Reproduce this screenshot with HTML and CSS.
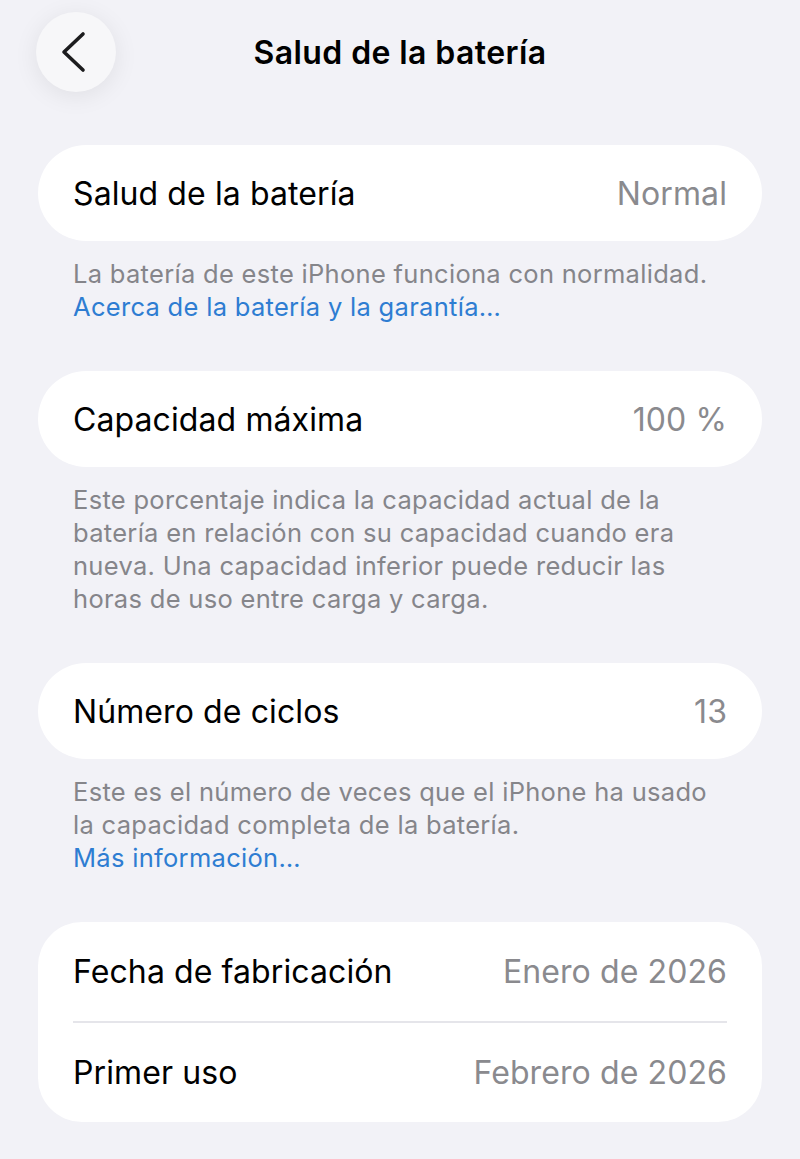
FILE: index.html
```html
<!DOCTYPE html>
<html>
<head>
    <title>Salud de la batería</title>
    <link rel="stylesheet" href="styles.css">
</head>
<body>
    <div class="nav-bar">
        <div class="back-btn">
            <svg width="28" height="42" viewBox="0 0 28 42">
                <path d="M24 3 L5 21 L24 39" fill="none" stroke="#1c1c1e" stroke-width="3.6" stroke-linecap="round" stroke-linejoin="round"/>
            </svg>
        </div>
        <h1 class="nav-title">Salud de la batería</h1>
    </div>

    <div class="group">
        <div class="card">
            <div class="row">
                <span class="row-label">Salud de la batería</span>
                <span class="row-value">Normal</span>
            </div>
        </div>
        <p class="footer">La batería de este iPhone funciona con normalidad.<br>
            <a class="link" href="#">Acerca de la batería y la garantía…</a></p>
    </div>

    <div class="group">
        <div class="card">
            <div class="row">
                <span class="row-label">Capacidad máxima</span>
                <span class="row-value">100 %</span>
            </div>
        </div>
        <p class="footer">Este porcentaje indica la capacidad actual de la batería en relación con su capacidad cuando era nueva. Una capacidad inferior puede reducir las horas de uso entre carga y carga.</p>
    </div>

    <div class="group">
        <div class="card">
            <div class="row">
                <span class="row-label">Número de ciclos</span>
                <span class="row-value">13</span>
            </div>
        </div>
        <p class="footer">Este es el número de veces que el iPhone ha usado la capacidad completa de la batería.<br>
            <a class="link" href="#">Más información…</a></p>
    </div>

    <div class="group">
        <div class="card card-multi">
            <div class="row">
                <span class="row-label">Fecha de fabricación</span>
                <span class="row-value">Enero de 2026</span>
            </div>
            <div class="divider"></div>
            <div class="row">
                <span class="row-label">Primer uso</span>
                <span class="row-value">Febrero de 2026</span>
            </div>
        </div>
    </div>
</body>
</html>
```

FILE: styles.css
```css
body {
    margin: 0;
    background-color: #f2f2f7;
    font-family: Inter, "Noto Sans", sans-serif;
    color: #000;
    -webkit-font-smoothing: antialiased;
}

.nav-bar {
    position: relative;
    height: 104px;
    display: flex;
    align-items: center;
    justify-content: center;
    margin-bottom: 41px;
}

.back-btn {
    position: absolute;
    left: 36px;
    top: 12px;
    width: 80px;
    height: 80px;
    border-radius: 50%;
    background-color: #f7f7f9;
    box-shadow: 0 4px 24px rgba(0, 0, 0, 0.08);
    display: flex;
    align-items: center;
    justify-content: center;
}

.back-btn svg {
    margin-left: -6px;
}

.nav-title {
    margin: 0;
    font-size: 32px;
    font-weight: 600;
    letter-spacing: 0.4px;
}

.group {
    margin-bottom: 48px;
}

.card {
    background-color: #fff;
    margin: 0 38px;
    border-radius: 48px;
    padding: 0 35px;
}

.card-multi {
    border-radius: 44px;
}

.row {
    height: 96px;
    display: flex;
    align-items: center;
    justify-content: space-between;
    font-size: 32px;
    letter-spacing: 0.1px;
}

.card-multi .row {
    height: 99px;
}

.row-value {
    color: #8a8a8e;
}

.divider {
    height: 2px;
    background-color: #e5e5ea;
}

.footer {
    margin: 0;
    padding: 16px 73px 0;
    font-size: 25.5px;
    line-height: 33px;
    color: #85858a;
    letter-spacing: 0.3px;
}

.link {
    color: #2e7dd2;
    text-decoration: none;
}
```
